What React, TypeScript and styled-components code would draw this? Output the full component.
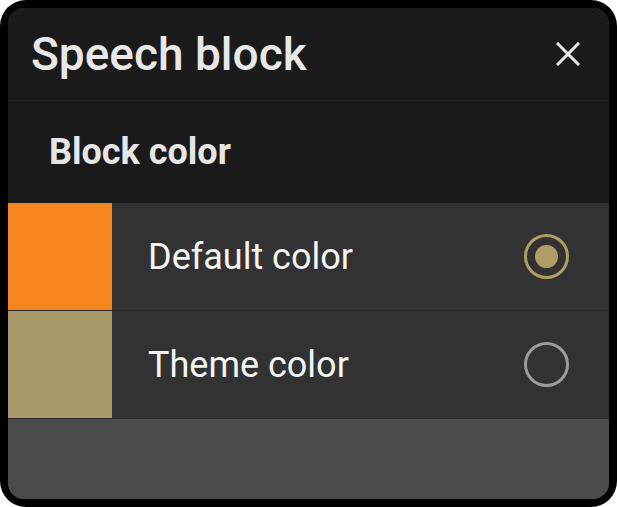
import * as React from "react";
import styled, { createGlobalStyle } from "styled-components";

const GlobalStyle = createGlobalStyle`
  html, body {
    margin: 0;
    padding: 0;
    background: #ffffff;
  }
  body {
    font-family: Roboto, "Noto Sans", sans-serif;
  }
`;

const Frame = styled.div`
  width: 617px;
  height: 507px;
  box-sizing: border-box;
  padding: 8px;
  background: #000000;
  border-radius: 26px;
`;

const Panel = styled.div`
  height: 100%;
  display: flex;
  flex-direction: column;
  border-radius: 16px;
  overflow: hidden;
  background: #4b4b4b;
`;

const Header = styled.div`
  height: 92px;
  flex: none;
  display: flex;
  align-items: center;
  justify-content: space-between;
  padding: 0 28px 0 23px;
  background: #1b1b1b;
  border-bottom: 1px solid #222222;
`;

const Title = styled.h1`
  margin: 0;
  font-size: 46px;
  font-weight: 500;
  color: #e8e8e8;
`;

const CloseButton = styled.button`
  width: 26px;
  height: 26px;
  padding: 0;
  border: none;
  background: transparent;
  display: flex;
  align-items: center;
  justify-content: center;
`;

const SectionTitle = styled.div`
  height: 102px;
  flex: none;
  display: flex;
  align-items: center;
  padding-left: 41px;
  background: #1a1a1a;
  font-size: 36px;
  font-weight: 700;
  color: #e6e6e6;
`;

const Row = styled.div`
  height: 107px;
  flex: none;
  display: flex;
  align-items: stretch;
  background: #323232;
  border-bottom: 1px solid #2a2a2a;
`;

const Swatch = styled.div<{ color: string }>`
  width: 104px;
  flex: none;
  background: ${(props) => props.color};
`;

const Label = styled.div`
  flex: 1;
  display: flex;
  align-items: center;
  padding-left: 36px;
  font-size: 36px;
  color: #f4f4f4;
`;

const RadioSlot = styled.div`
  display: flex;
  align-items: center;
  padding-right: 40px;
`;

const Radio = styled.div<{ checked?: boolean }>`
  width: 45px;
  height: 45px;
  box-sizing: border-box;
  border-radius: 50%;
  border: 3px solid ${(props) => (props.checked ? "#b09d66" : "#9c9c9c")};
  display: flex;
  align-items: center;
  justify-content: center;

  &::after {
    content: "";
    display: ${(props) => (props.checked ? "block" : "none")};
    width: 23px;
    height: 23px;
    border-radius: 50%;
    background: #b09d66;
  }
`;

const Footer = styled.div`
  flex: 1;
  background: #4b4b4b;
`;

const options = [
  { label: "Default color", color: "#f5861f", checked: true },
  { label: "Theme color", color: "#a89a68", checked: false },
];

export default function App() {
  return (
    <>
      <GlobalStyle />
      <Frame>
        <Panel>
          <Header>
            <Title>Speech block</Title>
            <CloseButton aria-label="Close">
              <svg width="24" height="24" viewBox="0 0 24 24">
                <path
                  d="M2 2 L22 22 M22 2 L2 22"
                  stroke="#e8e8e8"
                  strokeWidth="3"
                  strokeLinecap="square"
                />
              </svg>
            </CloseButton>
          </Header>
          <SectionTitle>Block color</SectionTitle>
          {options.map((opt) => (
            <Row key={opt.label}>
              <Swatch color={opt.color} />
              <Label>{opt.label}</Label>
              <RadioSlot>
                <Radio checked={opt.checked} />
              </RadioSlot>
            </Row>
          ))}
          <Footer />
        </Panel>
      </Frame>
    </>
  );
}
